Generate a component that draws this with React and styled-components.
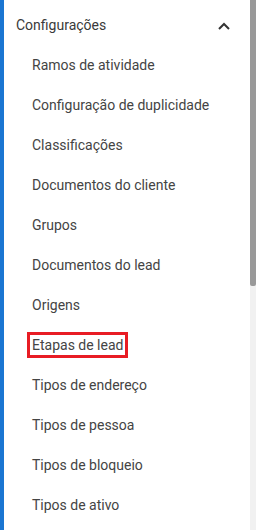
import styled, { createGlobalStyle } from 'styled-components';

const GlobalStyle = createGlobalStyle`
  html, body {
    margin: 0;
    padding: 0;
    background: #fff;
  }
`;

const Sidebar = styled.div`
  display: flex;
  width: 256px;
  height: 530px;
  overflow: hidden;
  font-family: Roboto, 'Liberation Sans', sans-serif;
  font-size: 14px;
  color: #444;
`;

const AccentBar = styled.div`
  flex: 0 0 4px;
  background: #1a76d2;
`;

const Menu = styled.div`
  flex: 1;
  background: #fff;
`;

const Header = styled.div`
  display: flex;
  align-items: flex-start;
  justify-content: space-between;
  height: 45px;
  box-sizing: border-box;
  padding: 15px 20px 0 12px;
  line-height: 20px;
  color: #3a3a3a;
`;

const Chevron = styled.svg`
  width: 12px;
  height: 20px;
  display: block;
`;

const List = styled.ul`
  list-style: none;
  margin: 0;
  padding: 0;
`;

const Item = styled.li`
  display: flex;
  align-items: center;
  height: 40px;
  padding-left: 28px;
`;

const Label = styled.span`
  line-height: 16px;
  outline: ${({ highlighted }) => (highlighted ? '3px solid #e81c24' : 'none')};
  outline-offset: 2px;
`;

const Scrollbar = styled.div`
  flex: 0 0 6px;
  display: flex;
  flex-direction: column;
  background: #f1f1f1;
`;

const Thumb = styled.div`
  height: 286px;
  background: #999;
  border-radius: 0 0 2px 2px;
`;

const items = [
  'Ramos de atividade',
  'Configuração de duplicidade',
  'Classificações',
  'Documentos do cliente',
  'Grupos',
  'Documentos do lead',
  'Origens',
  'Etapas de lead',
  'Tipos de endereço',
  'Tipos de pessoa',
  'Tipos de bloqueio',
  'Tipos de ativo',
];

export default function App() {
  return (
    <>
      <GlobalStyle />
      <Sidebar>
        <AccentBar />
        <Menu>
          <Header>
            <span>Configurações</span>
            <Chevron viewBox="0 0 12 20">
              <path d="M1 14 L6 9 L11 14" fill="none" stroke="#333" strokeWidth="2" />
            </Chevron>
          </Header>
          <List>
            {items.map((label) => (
              <Item key={label}>
                <Label highlighted={label === 'Etapas de lead'}>{label}</Label>
              </Item>
            ))}
          </List>
        </Menu>
        <Scrollbar>
          <Thumb />
        </Scrollbar>
      </Sidebar>
    </>
  );
}
